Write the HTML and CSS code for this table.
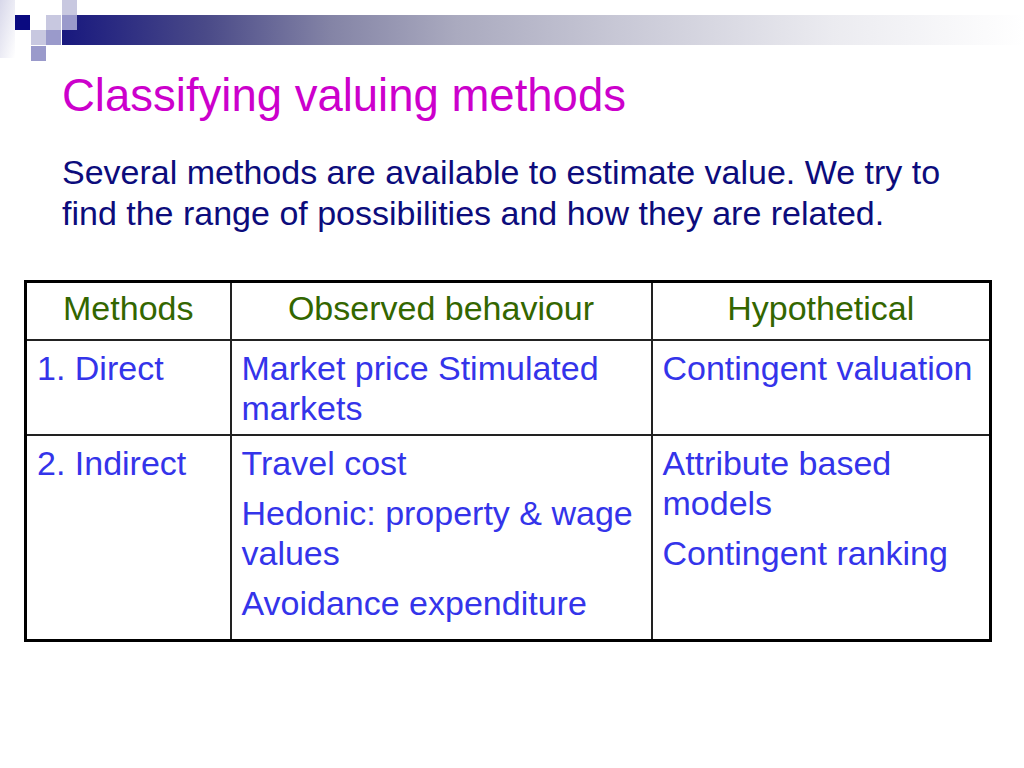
FILE: index.html
```html
<!DOCTYPE html>
<html>
<head>
<meta charset="utf-8">
<link rel="stylesheet" href="styles.css">
</head>
<body>
<div class="slide">
  <svg class="deco" width="1024" height="62" viewBox="0 0 1024 62">
    <defs>
      <linearGradient id="bar" x1="0" y1="0" x2="1" y2="0">
        <stop offset="0" stop-color="#18187e"/>
        <stop offset="0.15" stop-color="#4a4a88"/>
        <stop offset="0.28" stop-color="#8484a6"/>
        <stop offset="0.41" stop-color="#aaaabf"/>
        <stop offset="0.58" stop-color="#c8c8d6"/>
        <stop offset="0.8" stop-color="#ebebf0"/>
        <stop offset="1" stop-color="#ffffff"/>
      </linearGradient>
      <linearGradient id="strip" x1="0" y1="0" x2="1" y2="1">
        <stop offset="0" stop-color="#d8d8ea"/>
        <stop offset="1" stop-color="#ffffff"/>
      </linearGradient>
    </defs>
    <rect x="0" y="0" width="15" height="58" fill="url(#strip)"/>
    <rect x="62" y="15" width="962" height="30" fill="url(#bar)"/>
    <rect x="62" y="0" width="15" height="15" fill="#c8c8e0"/>
    <rect x="15" y="15" width="15" height="15" fill="#0a0a80"/>
    <rect x="46" y="15" width="15" height="15" fill="#c8c8e0"/>
    <rect x="62" y="15" width="15" height="15" fill="#9a9acb"/>
    <rect x="31" y="30" width="15" height="15" fill="#c8c8e0"/>
    <rect x="46" y="30" width="15" height="15" fill="#9a9acb"/>
    <rect x="31" y="46" width="15" height="15" fill="#9a9acb"/>
  </svg>
  <div class="content">
    <h1 class="title">Classifying valuing methods</h1>
    <p class="lead">Several methods are available to estimate value. We try to find the range of possibilities and how they are related.</p>
  </div>
  <table class="grid">
    <colgroup>
      <col class="c1"><col class="c2"><col class="c3">
    </colgroup>
    <tr class="head">
      <th>Methods</th>
      <th>Observed behaviour</th>
      <th>Hypothetical</th>
    </tr>
    <tr class="r2">
      <td><p>1. Direct</p></td>
      <td><p>Market price Stimulated markets</p></td>
      <td><p>Contingent valuation</p></td>
    </tr>
    <tr class="r3">
      <td><p>2. Indirect</p></td>
      <td><p>Travel cost</p><p>Hedonic: property &amp; wage values</p><p>Avoidance expenditure</p></td>
      <td><p>Attribute based models</p><p>Contingent ranking</p></td>
    </tr>
  </table>
</div>
</body>
</html>
```
FILE: styles.css
```css
html, body {
  margin: 0;
  padding: 0;
  background: #ffffff;
}
.slide {
  width: 1024px;
  height: 768px;
  position: relative;
  overflow: hidden;
  font-family: "Liberation Sans", Arial, sans-serif;
}
.deco {
  display: block;
}
.content {
  padding-left: 62px;
  padding-right: 60px;
}
.title {
  margin: 8px 0 0 0;
  font-weight: normal;
  font-size: 45.5px;
  line-height: 52px;
  color: #cc00cc;
}
.lead {
  margin: 30px 0 0 0;
  font-size: 34px;
  line-height: 41px;
  color: #0c0c7c;
}
.grid {
  margin: 46px 0 0 24px;
  border-collapse: collapse;
  border: 3px solid #000;
  width: 965px;
  table-layout: fixed;
}
.c1 { width: 205px; }
.c2 { width: 421px; }
.c3 { width: 339px; }
.grid th, .grid td {
  border: 2px solid #222;
  vertical-align: top;
  font-size: 34px;
  line-height: 40px;
  padding: 7px 10px 0 10px;
  text-align: left;
  font-weight: normal;
}
.grid th {
  text-align: center;
  color: #336600;
  height: 51px;
  padding-top: 5px;
}
.grid td {
  color: #3434ea;
}
.grid td p {
  margin: 0 0 10px 0;
}
.grid td p:last-child {
  margin-bottom: 0;
}
.r2 td { height: 86px; }
.r3 td { height: 196px; }
```
